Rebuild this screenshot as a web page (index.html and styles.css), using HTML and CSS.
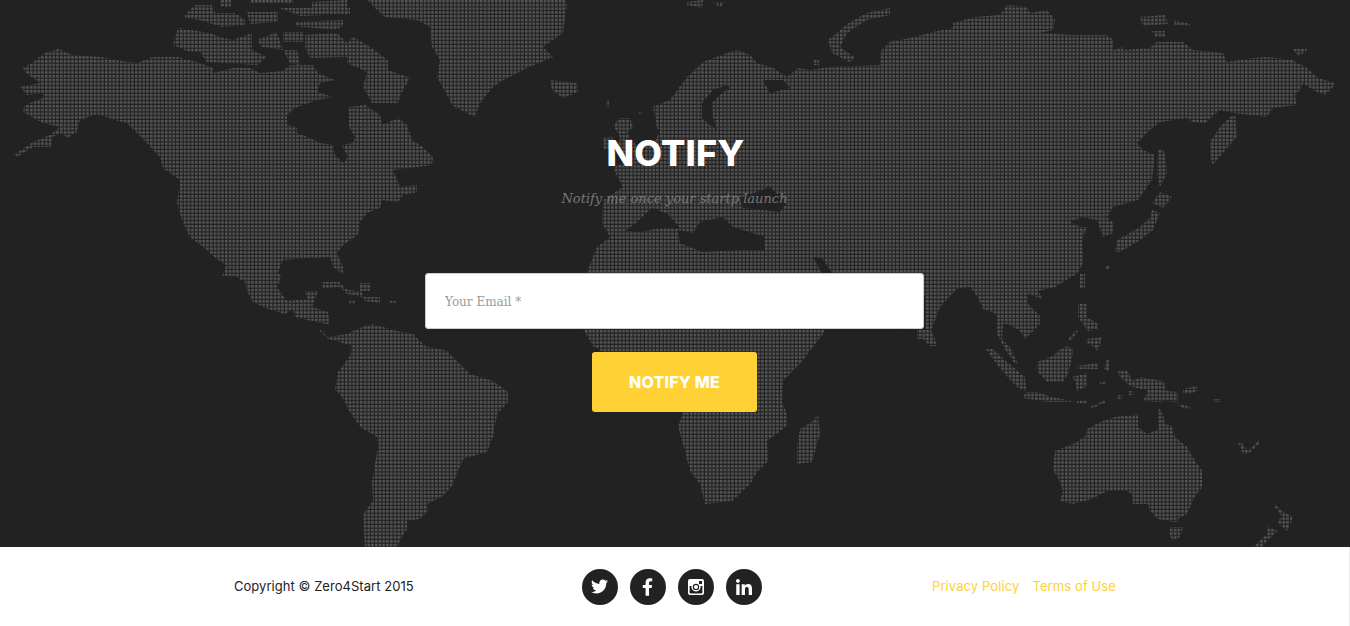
FILE: index.html
```html
<!DOCTYPE html>
<html lang="en">
<head>
    <meta charset="UTF-8">
    <meta name="viewport" content="width=device-width, initial-scale=1.0">
    <title>Notify</title>
    <link rel="stylesheet" href="styles.css">
</head>
<body>
    <section class="notify">
        <!-- dotted world map, coordinates are page pixels -->
        <svg class="world-map" width="1350" height="547" viewBox="0 0 1350 547" aria-hidden="true">
            <defs>
                <pattern id="dots" width="3.75" height="3.75" patternUnits="userSpaceOnUse">
                    <rect width="2.5" height="2.5" fill="#565656"/>
                </pattern>
            </defs>
            <g fill="url(#dots)">
                <!-- north america -->
                <polygon points="23,68 33,62 45,53 58,49 73,55 100,57 122,61 137,63 153,57 178,57 197,62 213,68 213,73 233,68 250,68 260,73 283,71 290,65 313,65 318,73 335,80 320,83 318,92 333,97 317,100 295,108 287,115 287,125 297,127 297,133 308,137 320,143 333,145 335,155 343,163 348,157 342,145 353,143 355,137 349,127 349,107 365,105 380,115 382,125 398,118 407,125 412,140 423,147 433,157 432,165 393,170 400,187 417,185 417,192 403,195 398,202 382,200 380,208 367,213 360,222 358,235 343,245 337,253 343,267 343,274 333,267 330,257 307,258 283,260 278,273 282,276 277,287 287,301 307,299 305,291 318,291 312,307 328,312 330,324 325,324 295,317 293,309 285,314 268,309 253,302 247,291 245,282 235,276 222,276 227,263 237,273 213,256 207,250 190,237 182,220 177,203 180,180 163,168 160,157 147,143 127,123 115,120 97,114 80,120 77,132 67,138 62,133 52,137 52,147 33,147 17,157 15,154 33,142 50,135 60,127 43,123 23,112 25,105 43,98 43,93 27,95 20,87 40,83 25,72"/>
                <!-- canadian arctic -->
                <polygon points="305,35 337,33 347,43 353,37 367,45 388,60 388,70 410,78 402,92 398,103 372,103 363,87 367,72 347,63 347,57 310,58 305,47"/>
                <polygon points="178,28 190,30 210,33 223,38 233,40 252,33 252,50 267,57 257,65 207,62 200,52 190,52 173,45"/>
                <polygon points="257,40 277,32 283,50 262,47"/>
                <polygon points="283,32 304,32 304,42 283,42"/>
                <polygon points="283,50 297,50 300,65 290,63"/>
                <polygon points="185,15 195,5 212,5 215,13 235,13 245,20 245,25 222,27 200,20 185,18"/>
                <polygon points="220,0 231,0 231,7 220,7"/>
                <polygon points="247,12 278,12 278,22 250,24"/>
                <polygon points="280,8 350,8 350,14 300,16"/>
                <polygon points="295,22 343,20 343,26 335,30 295,26"/>
                <polygon points="312,2 347,0 347,8 312,8"/>
                <polygon points="250,0 293,0 293,3 250,3"/>
                <!-- greenland, iceland, svalbard -->
                <polygon points="368,0 375,8 385,17 417,20 430,27 432,47 440,60 437,77 447,95 452,105 467,113 475,117 480,103 492,88 500,82 527,68 553,57 543,47 563,33 567,5 565,0"/>
                <polygon points="550,80 577,83 578,92 563,98 552,90"/>
                <polygon points="687,2 703,0 702,8 687,5"/>
                <polygon points="712,2 725,2 720,7"/>
                <polygon points="606,100 609,100 609,106 606,106"/>
                <polygon points="639,111 642,111 642,114 639,114"/>
                <!-- uk, ireland -->
                <polygon points="613,125 620,118 630,118 633,127 627,133 632,140 640,150 625,160 618,150 620,137"/>
                <polygon points="603,137 613,137 613,150 603,150"/>
                <!-- eurasia and africa -->
                <polygon points="653,107 670,100 687,77 703,62 727,53 738,50 750,55 757,63 773,68 787,77 798,68 810,70 830,67 880,65 880,52 892,40 900,40 910,38 933,32 953,28 953,23 975,17 1000,15 1007,5 1027,7 1030,13 1047,10 1055,20 1053,30 1040,33 1073,35 1090,35 1107,35 1113,40 1113,50 1123,47 1123,50 1150,48 1157,42 1183,42 1193,50 1223,53 1227,62 1253,58 1267,57 1292,60 1307,68 1318,78 1335,83 1333,87 1325,95 1313,90 1303,83 1300,90 1295,95 1297,105 1273,108 1267,117 1233,113 1220,110 1205,123 1193,122 1187,118 1160,122 1148,132 1137,143 1143,150 1155,155 1152,180 1138,200 1113,207 1107,217 1097,220 1103,237 1113,233 1113,223 1107,217 1097,220 1082,217 1070,222 1080,227 1087,227 1082,240 1083,263 1077,274 1073,276 1055,287 1038,291 1043,299 1028,294 1028,304 1040,316 1040,324 1025,339 1020,331 1008,324 1003,324 1002,339 1010,347 1018,364 1015,364 1005,349 997,334 997,314 983,309 977,296 970,287 957,289 940,307 932,329 924,329 900,300 825,329 823,334 800,364 783,381 782,402 787,414 787,426 767,441 768,461 758,471 750,484 732,501 705,504 700,484 690,471 683,444 678,427 683,412 650,380 593,346 583,329 587,272 597,247 610,237 602,223 603,200 623,187 613,168 628,160 640,150 655,140 660,132 657,128"/>
                <!-- india tip -->
                <polygon points="917,329 917,339 923,339 930,346 937,346 933,334 930,329"/>
                <!-- novaya zemlya, north russian islands -->
                <polygon points="828,40 850,22 867,13 890,8 890,15 867,20 847,33 840,47 855,58 850,62 832,53"/>
                <polygon points="814,60 819,60 819,65 814,65"/>
                <polygon points="1140,17 1165,15 1168,24 1143,26"/>
                <polygon points="1173,20 1190,24 1190,26 1175,25"/>
                <polygon points="1152,31 1165,31 1165,37 1155,37"/>
                <polygon points="1293,49 1307,49 1305,53 1297,55"/>
                <!-- kamchatka side, japan -->
                <polygon points="1235,115 1237,137 1228,147 1217,160 1213,165 1210,157 1210,142 1220,127 1230,117"/>
                <polygon points="1158,148 1165,152 1167,173 1160,187 1157,173"/>
                <polygon points="1160,192 1172,197 1163,208 1152,203"/>
                <polygon points="1152,210 1160,213 1153,230 1140,240 1120,252 1115,252 1117,240 1140,227 1150,218"/>
                <polygon points="1106,266 1110,266 1110,270 1106,270"/>
                <!-- south east asia islands -->
                <polygon points="1080,274 1085,274 1085,288 1080,288"/>
                <polygon points="1078,304 1087,304 1087,317 1098,324 1097,329 1088,331 1078,317"/>
                <polygon points="1087,339 1102,337 1098,351 1093,346 1086,342"/>
                <polygon points="1068,339 1076,330 1078,332 1070,341"/>
                <polygon points="1068,346 1073,349 1073,354 1068,374 1063,382 1047,382 1038,372 1037,362 1053,356 1060,349"/>
                <polygon points="986,349 993,349 1007,362 1025,377 1026,391 1017,387 1003,372 993,359"/>
                <polygon points="1023,396 1027,392 1037,392 1052,397 1073,401 1073,402 1048,402 1023,398"/>
                <polygon points="1072,377 1087,373 1087,386 1077,391 1075,381"/>
                <polygon points="1078,366 1097,363 1098,369 1078,369"/>
                <polygon points="1107,359 1110,359 1110,372 1104,369"/>
                <polygon points="1100,382 1106,381 1106,384 1100,384"/>
                <polygon points="1077,401 1087,400 1087,403 1077,403"/>
                <polygon points="1090,407 1105,400 1105,403 1092,408"/>
                <polygon points="1118,371 1128,371 1132,381 1140,377 1163,381 1167,391 1178,392 1178,402 1165,401 1160,402 1143,401 1148,391 1130,386 1120,377"/>
                <polygon points="1183,389 1197,386 1197,391 1190,394 1183,394"/>
                <polygon points="1177,403 1190,407 1190,409 1183,409"/>
                <polygon points="1213,399 1220,399 1220,402 1213,402"/>
                <polygon points="1118,395 1122,395 1122,399 1118,399"/>
                <polygon points="1129,391 1133,391 1133,395 1129,395"/>
                <!-- small pacific islands -->
                <polygon points="1238,443 1242,443 1248,451 1252,447 1260,439 1260,443 1248,454 1243,454"/>
                <!-- australia, new zealand -->
                <polygon points="1087,429 1100,422 1115,417 1138,414 1138,427 1147,434 1158,429 1158,407 1163,414 1165,424 1172,426 1175,437 1187,447 1195,461 1202,471 1202,487 1195,496 1187,514 1178,519 1178,522 1173,522 1158,519 1150,511 1148,504 1133,504 1132,494 1127,491 1107,491 1092,499 1073,504 1060,501 1063,491 1058,477 1053,471 1055,451 1073,444 1085,437"/>
                <polygon points="1170,527 1183,527 1180,537 1173,541 1169,534"/>
                <polygon points="1273,502 1282,511 1293,517 1287,531 1277,522 1282,517 1275,507"/>
                <polygon points="1268,527 1278,531 1267,541 1262,547 1253,547 1267,534"/>
                <!-- south america -->
                <polygon points="320,329 328,337 347,334 357,329 372,324 397,331 413,334 425,346 447,351 470,374 493,381 508,392 508,402 497,414 493,437 487,452 463,459 458,471 452,486 443,496 427,504 428,511 420,519 407,521 407,529 402,537 397,547 365,547 363,514 373,501 372,481 378,447 377,437 360,427 348,409 345,401 335,389 338,372 350,356 352,346 340,342 328,339 320,331"/>
                <!-- caribbean -->
                <polygon points="323,282 340,282 345,289 362,292 363,297 347,294 340,287 323,288"/>
                <polygon points="363,297 380,297 380,303 365,301"/>
                <polygon points="390,301 396,301 396,303 390,303"/>
                <polygon points="349,301 355,301 355,304 349,304"/>
                <polygon points="360,283 370,283 370,291 360,291"/>
                <!-- madagascar -->
                <polygon points="818,414 820,434 812,462 797,464 797,447 800,429 813,421"/>
            </g>
            <!-- inland seas cut back to the background -->
            <g class="map-sea">
                <polygon points="727,85 713,90 702,103 702,118 710,125 717,130 713,117 712,103 722,93 730,88"/>
                <polygon points="763,80 783,80 790,88 770,93"/>
                <polygon points="740,198 770,187 787,203 780,212 743,208"/>
                <polygon points="678,230 693,233 700,222 723,217 733,227 765,237 765,250 740,250 703,252 680,243"/>
                <polygon points="625,231 637,222 652,208 668,214 680,228 660,228 640,232"/>
                <polygon points="813,257 822,258 832,273 822,273"/>
                <polygon points="890,296 925,296 925,330 900,330"/>
            </g>
        </svg>

        <div class="notify-inner">
            <h1 class="notify-title">NOTIFY</h1>
            <p class="notify-sub">Notify me once your startp launch</p>
            <form class="notify-form">
                <input class="email-input" type="email" placeholder="Your Email *">
                <button class="notify-btn" type="button">NOTIFY ME</button>
            </form>
        </div>
    </section>

    <footer class="site-footer">
        <p class="copyright">Copyright © Zero4Start 2015</p>
        <div class="social">
            <a class="social-link" href="#" aria-label="Twitter">
                <svg width="17" height="17" viewBox="0 0 512 512"><path d="M459.37 151.716c.325 4.548.325 9.097.325 13.645 0 138.72-105.583 298.558-298.558 298.558-59.452 0-114.68-17.219-161.137-47.106 8.447.974 16.568 1.299 25.34 1.299 49.055 0 94.213-16.568 130.274-44.832-46.132-.975-84.792-31.188-98.112-72.772 6.498.974 12.995 1.624 19.818 1.624 9.421 0 18.843-1.3 27.614-3.573-48.081-9.747-84.143-51.98-84.143-102.985v-1.299c13.969 7.797 30.214 12.67 47.431 13.319-28.264-18.843-46.781-51.005-46.781-87.391 0-19.492 5.197-37.36 14.294-52.954 51.655 63.675 129.3 105.258 216.365 109.807-1.624-7.797-2.599-15.918-2.599-24.04 0-57.828 46.782-104.934 104.934-104.934 30.213 0 57.502 12.67 76.67 33.137 23.715-4.548 46.456-13.32 66.599-25.34-7.798 24.366-24.366 44.833-46.132 57.827 21.117-2.273 41.584-8.122 60.426-16.243-14.292 20.791-32.161 39.308-52.628 54.253z"/></svg>
            </a>
            <a class="social-link" href="#" aria-label="Facebook">
                <svg width="11" height="18" viewBox="0 0 320 512"><path d="M279.14 288l14.22-92.66h-88.91v-60.13c0-25.35 12.42-50.06 52.24-50.06h40.42V6.26S260.43 0 225.36 0c-73.22 0-121.08 44.38-121.08 124.72v70.62H22.89V288h81.39v224h100.17V288z"/></svg>
            </a>
            <a class="social-link" href="#" aria-label="Instagram">
                <svg width="16" height="16" viewBox="0 0 16 16"><path fill-rule="evenodd" d="M2 0h12a2 2 0 0 1 2 2v12a2 2 0 0 1-2 2H2a2 2 0 0 1-2-2V2a2 2 0 0 1 2-2zM11 2v3h3V2zM1.6 7v6.6a.8.8 0 0 0 .8.8h11.2a.8.8 0 0 0 .8-.8V7h-1.9a4.6 4.6 0 1 1-9 0zM8 4.7a3.2 3.2 0 1 0 0 6.4 3.2 3.2 0 0 0 0-6.4z"/><circle cx="8" cy="7.9" r="2"/></svg>
            </a>
            <a class="social-link" href="#" aria-label="LinkedIn">
                <svg width="16" height="16" viewBox="0 0 448 448"><path d="M100.28 448H7.4V148.9h92.88zM53.79 108.1C24.09 108.1 0 83.5 0 53.8a53.79 53.79 0 0 1 107.58 0c0 29.7-24.1 54.3-53.79 54.3zM447.9 448h-92.68V302.4c0-34.7-.7-79.2-48.29-79.2-48.29 0-55.69 37.7-55.69 76.7V448h-92.78V148.9h89.08v40.8h1.3c12.4-23.5 42.69-48.3 87.88-48.3 94 0 111.28 61.9 111.28 142.3V448z"/></svg>
            </a>
        </div>
        <nav class="footer-links">
            <a href="#">Privacy Policy</a>
            <a href="#">Terms of Use</a>
        </nav>
    </footer>
</body>
</html>
```

FILE: styles.css
```css
* {
    box-sizing: border-box;
}
body {
    margin: 0;
    font-family: "Inter", "Liberation Sans", sans-serif;
    background-color: #ffffff;
    overflow: hidden;
}
a {
    text-decoration: none;
}

/* notify section */
.notify {
    position: relative;
    height: 547px;
    background-color: #222222;
    overflow: hidden;
}
.world-map {
    position: absolute;
    top: 0;
    left: 0;
}
.map-sea {
    fill: #222222;
}
.notify-inner {
    position: relative;
    display: flex;
    flex-direction: column;
    align-items: center;
    padding: 131px 1px 0 0;
}
.notify-title {
    margin: 0 0 0 2px;
    font-size: 36px;
    line-height: 45px;
    font-weight: 800;
    letter-spacing: 0.2px;
    color: #ffffff;
}
.notify-sub {
    margin: 13px 0 0;
    font-family: "DejaVu Serif", serif;
    font-size: 13px;
    font-style: italic;
    line-height: 20px;
    color: #777777;
}
.notify-form {
    display: flex;
    flex-direction: column;
    align-items: center;
    margin-top: 64px;
}
.email-input {
    width: 499px;
    height: 56px;
    padding: 2px 19px 0;
    background-color: #ffffff;
    border: 1px solid #cccccc;
    border-radius: 3px;
    font-family: "DejaVu Serif", serif;
    font-size: 12px;
}
.email-input::placeholder {
    color: #999999;
    opacity: 1;
}
.notify-btn {
    width: 165px;
    height: 60px;
    margin-top: 23px;
    background-color: #ffd135;
    border: none;
    border-radius: 3px;
    color: #ffffff;
    font-family: "Inter", "Liberation Sans", sans-serif;
    font-size: 16px;
    font-weight: 800;
    letter-spacing: 0.2px;
}

/* footer */
.site-footer {
    display: flex;
    align-items: center;
    justify-content: space-between;
    height: 79px;
    padding: 0 233px 0 234px;
    border-right: 1px solid #eeeeee;
    font-size: 13px;
    font-weight: 400;
}
.copyright {
    margin: 0 0 1px;
    letter-spacing: 0.04px;
    color: #222222;
}
.social {
    display: flex;
    gap: 12px;
    margin-right: 2px;
}
.social-link {
    display: flex;
    align-items: center;
    justify-content: center;
    width: 36px;
    height: 36px;
    border-radius: 50%;
    background-color: #222222;
    fill: #ffffff;
}
.footer-links {
    display: flex;
    gap: 13px;
    margin-bottom: 1px;
    letter-spacing: 0.1px;
}
.footer-links a {
    color: #ffd135;
}
```
